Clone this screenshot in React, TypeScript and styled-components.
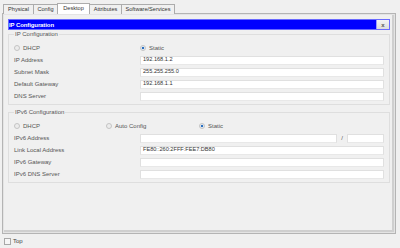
import React from "react";
import styled, { createGlobalStyle } from "styled-components";

const Global = createGlobalStyle`
  html, body { margin: 0; padding: 0; background: #f0f0f0; }
  body { font-family: "Liberation Sans", Arial, sans-serif; font-size: 6px; color: #444; }
  * { box-sizing: border-box; }
`;

const Page = styled.div`
  width: 400px;
  height: 248px;
  display: flex;
  flex-direction: column;
  overflow: hidden;
`;

const TabBar = styled.div`
  height: 14px;
  display: flex;
  align-items: flex-end;
  padding-left: 3px;
`;

const Tab = styled.div<{ $w: number; $active?: boolean }>`
  width: ${(p) => p.$w}px;
  height: ${(p) => (p.$active ? 11 : 10)}px;
  margin-bottom: ${(p) => (p.$active ? 0 : 0)}px;
  border: 1px solid #acacac;
  border-bottom: none;
  margin-right: -1px;
  background: ${(p) => (p.$active ? "#ffffff" : "#f0f0f0")};
  position: relative;
  z-index: ${(p) => (p.$active ? 2 : 1)};
  display: flex;
  align-items: center;
  justify-content: center;
  font-size: 5.6px;
  color: #333;
  line-height: 1;
`;

const Panel = styled.div`
  flex: 1;
  margin: -1px 4px 0 2px;
  border: 1px solid #b4b4b4;
  box-shadow: inset 0 0 0 1px #e4e4e4, inset -1px -1px 0 2px #cfcfcf;
  padding: 5px 4px 0 4px;
  display: flex;
  flex-direction: column;
`;

const TitleBar = styled.div`
  height: 11px;
  margin: 0 1px 0 1px;
  background: #0000ff;
  border: 1px solid #6a6aff;
  display: flex;
  align-items: center;
  justify-content: space-between;
  color: #ffffff;
  font-size: 6px;
  font-weight: bold;
  line-height: 1;
`;

const TitleText = styled.span`
  padding-left: 0;
  letter-spacing: -0.1px;
`;

const CloseBtn = styled.div`
  width: 13px;
  height: 9px;
  background: linear-gradient(#f4f4f4, #dcdcdc);
  border-left: 1px solid #9a9aff;
  display: flex;
  align-items: center;
  justify-content: center;
  color: #555;
  font-size: 6px;
  font-weight: bold;
`;

const Group = styled.fieldset<{ $gap?: number }>`
  margin: ${(p) => p.$gap ?? 0}px 1px 0 1px;
  padding: 4px 5px 2px 5px;
  border: 1px solid #dedede;
  min-width: 0;
`;

const Legend = styled.legend`
  font-size: 6px;
  line-height: 8px;
  height: 8px;
  padding: 0 1px;
  margin-left: 0;
  color: #555;
`;

const Rows = styled.div`
  display: grid;
  grid-template-columns: 126px 1fr;
  grid-auto-rows: 12px;
  align-items: center;
`;

const RadioRow = styled.div`
  grid-column: 1 / -1;
  display: flex;
  align-items: center;
  height: 12px;
`;

const RadioItem = styled.label<{ $w?: number }>`
  display: flex;
  align-items: center;
  gap: 3px;
  width: ${(p) => (p.$w ? `${p.$w}px` : "auto")};
  color: #555;
`;

const RadioDot = styled.span<{ $on?: boolean }>`
  width: 6px;
  height: 6px;
  border-radius: 50%;
  border: 1px solid #c4c4c4;
  background: ${(p) =>
    p.$on
      ? "radial-gradient(circle, #2a6fc0 0 1.3px, #e9eef4 1.6px)"
      : "#ececec"};
`;

const Label = styled.span`
  color: #555;
  white-space: nowrap;
`;

const Input = styled.div`
  height: 9px;
  background: #ffffff;
  border: 1px solid #e0e0e0;
  border-bottom-color: #e8e8e8;
  display: flex;
  align-items: center;
  padding-left: 2px;
  font-size: 5.6px;
  color: #333;
  line-height: 1;
`;

const SplitInput = styled.div`
  display: grid;
  grid-template-columns: 1fr 10px 37px;
  align-items: center;
`;

const Slash = styled.span`
  text-align: center;
  color: #555;
`;

const Footer = styled.div`
  height: 14px;
  display: flex;
  align-items: center;
  padding-left: 4px;
  gap: 2px;
  color: #444;
`;

const CheckBox = styled.span`
  width: 7px;
  height: 7px;
  border: 1px solid #a8a8a8;
  background: #f6f6f6;
`;

export default function App() {
  return (
    <Page>
      <Global />
      <TabBar>
        <Tab $w={31}>Physical</Tab>
        <Tab $w={25}>Config</Tab>
        <Tab $w={33} $active>Desktop</Tab>
        <Tab $w={33}>Attributes</Tab>
        <Tab $w={54}>Software/Services</Tab>
      </TabBar>
      <Panel>
        <TitleBar>
          <TitleText>IP Configuration</TitleText>
          <CloseBtn>x</CloseBtn>
        </TitleBar>
        <Group>
          <Legend>IP Configuration</Legend>
          <Rows>
            <RadioRow>
              <RadioItem $w={126}>
                <RadioDot /> DHCP
              </RadioItem>
              <RadioItem>
                <RadioDot $on /> Static
              </RadioItem>
            </RadioRow>
            <Label>IP Address</Label>
            <Input>192.168.1.2</Input>
            <Label>Subnet Mask</Label>
            <Input>255.255.255.0</Input>
            <Label>Default Gateway</Label>
            <Input>192.168.1.1</Input>
            <Label>DNS Server</Label>
            <Input />
          </Rows>
        </Group>
        <Group $gap={3}>
          <Legend>IPv6 Configuration</Legend>
          <Rows>
            <RadioRow>
              <RadioItem $w={92}>
                <RadioDot /> DHCP
              </RadioItem>
              <RadioItem $w={93}>
                <RadioDot /> Auto Config
              </RadioItem>
              <RadioItem>
                <RadioDot $on /> Static
              </RadioItem>
            </RadioRow>
            <Label>IPv6 Address</Label>
            <SplitInput>
              <Input />
              <Slash>/</Slash>
              <Input />
            </SplitInput>
            <Label>Link Local Address</Label>
            <Input>FE80::260:2FFF:FEE7:DB80</Input>
            <Label>IPv6 Gateway</Label>
            <Input />
            <Label>IPv6 DNS Server</Label>
            <Input />
          </Rows>
        </Group>
      </Panel>
      <Footer>
        <CheckBox />
        <span>Top</span>
      </Footer>
    </Page>
  );
}
